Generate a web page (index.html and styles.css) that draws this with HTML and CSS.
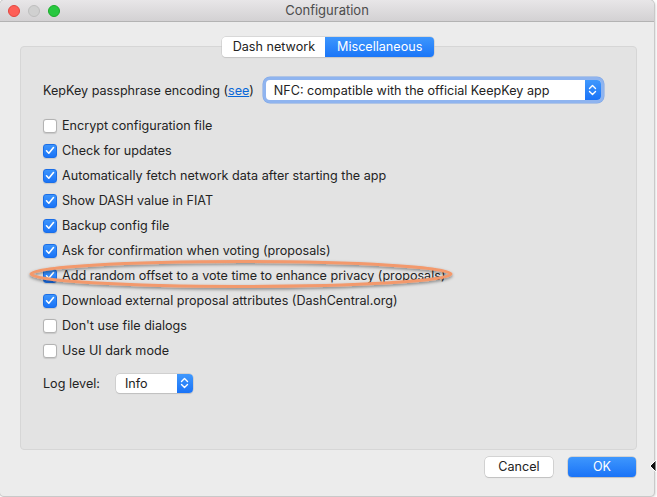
FILE: index.html
```html
<!DOCTYPE html>
<html>
<head>
<meta charset="utf-8">
<link rel="stylesheet" href="styles.css">
</head>
<body>
<div class="window">
  <div class="titlebar">
    <div class="lights">
      <span class="light red"></span>
      <span class="light gray"></span>
      <span class="light green"></span>
    </div>
    <div class="title">Configuration</div>
  </div>
  <div class="content">
    <div class="tabs">
      <div class="tab">Dash network</div>
      <div class="tab active">Miscellaneous</div>
    </div>
    <div class="panel">
      <div class="enc-row">
        <span class="label">KepKey passphrase encoding (<a class="link">see</a>)</span>
        <div class="select big focus">
          <span class="select-text">NFC: compatible with the official KeepKey app</span>
          <span class="stepper"><svg width="9" height="12" viewBox="0 0 9 12"><path d="M1.5 4.5 L4.5 1.5 L7.5 4.5 M1.5 7.5 L4.5 10.5 L7.5 7.5" fill="none" stroke="#fff" stroke-width="1.4" stroke-linecap="round" stroke-linejoin="round"/></svg></span>
        </div>
      </div>
      <div class="checks">
        <div class="check"><span class="box"></span>Encrypt configuration file</div>
        <div class="check"><span class="box on"><svg width="10" height="9" viewBox="0 0 10 9"><path d="M1.5 4.8 L3.8 7.2 L8.5 1.5" fill="none" stroke="#fff" stroke-width="1.6" stroke-linecap="round" stroke-linejoin="round"/></svg></span>Check for updates</div>
        <div class="check"><span class="box on"><svg width="10" height="9" viewBox="0 0 10 9"><path d="M1.5 4.8 L3.8 7.2 L8.5 1.5" fill="none" stroke="#fff" stroke-width="1.6" stroke-linecap="round" stroke-linejoin="round"/></svg></span>Automatically fetch network data after starting the app</div>
        <div class="check"><span class="box on"><svg width="10" height="9" viewBox="0 0 10 9"><path d="M1.5 4.8 L3.8 7.2 L8.5 1.5" fill="none" stroke="#fff" stroke-width="1.6" stroke-linecap="round" stroke-linejoin="round"/></svg></span>Show DASH value in FIAT</div>
        <div class="check"><span class="box on"><svg width="10" height="9" viewBox="0 0 10 9"><path d="M1.5 4.8 L3.8 7.2 L8.5 1.5" fill="none" stroke="#fff" stroke-width="1.6" stroke-linecap="round" stroke-linejoin="round"/></svg></span>Backup config file</div>
        <div class="check"><span class="box on"><svg width="10" height="9" viewBox="0 0 10 9"><path d="M1.5 4.8 L3.8 7.2 L8.5 1.5" fill="none" stroke="#fff" stroke-width="1.6" stroke-linecap="round" stroke-linejoin="round"/></svg></span>Ask for confirmation when voting (proposals)</div>
        <div class="check"><span class="box on"><svg width="10" height="9" viewBox="0 0 10 9"><path d="M1.5 4.8 L3.8 7.2 L8.5 1.5" fill="none" stroke="#fff" stroke-width="1.6" stroke-linecap="round" stroke-linejoin="round"/></svg></span>Add random offset to a vote time to enhance privacy (proposals)</div>
        <div class="check"><span class="box on"><svg width="10" height="9" viewBox="0 0 10 9"><path d="M1.5 4.8 L3.8 7.2 L8.5 1.5" fill="none" stroke="#fff" stroke-width="1.6" stroke-linecap="round" stroke-linejoin="round"/></svg></span>Download external proposal attributes (DashCentral.org)</div>
        <div class="check"><span class="box"></span>Don't use file dialogs</div>
        <div class="check"><span class="box"></span>Use UI dark mode</div>
      </div>
      <div class="log-row">
        <span class="label">Log level:</span>
        <div class="select small">
          <span class="select-text">Info</span>
          <span class="stepper"><svg width="9" height="12" viewBox="0 0 9 12"><path d="M1.5 4.5 L4.5 1.5 L7.5 4.5 M1.5 7.5 L4.5 10.5 L7.5 7.5" fill="none" stroke="#fff" stroke-width="1.4" stroke-linecap="round" stroke-linejoin="round"/></svg></span>
        </div>
      </div>
    </div>
    <div class="buttons">
      <div class="btn">Cancel</div>
      <div class="btn primary">OK</div>
    </div>
  </div>
</div>
<svg class="annotation" width="657" height="497" viewBox="0 0 657 497">
  <defs>
    <filter id="sh" x="-10%" y="-50%" width="120%" height="200%">
      <feDropShadow dx="0" dy="1.5" stdDeviation="1.5" flood-color="#000" flood-opacity="0.45"/>
    </filter>
  </defs>
  <ellipse cx="241" cy="274" rx="210" ry="12.5" fill="none" stroke="#f3996c" stroke-width="3" filter="url(#sh)"/>
</svg>
<svg class="cursor" width="8" height="14" viewBox="0 0 8 14"><path d="M7 1 L1 7 L7 13 Z" fill="#111" stroke="#fff" stroke-width="1"/></svg>
</body>
</html>
```
FILE: styles.css
```css
html, body {
  margin: 0;
  padding: 0;
  background: #ffffff;
  width: 657px;
  height: 497px;
  overflow: hidden;
  font-family: Inter, "Liberation Sans", Arial, sans-serif;
  font-size: 12.6px;
  color: #232323;
}
.window {
  width: 654px;
  height: 496px;
  background: #ececec;
  border-radius: 5px 5px 4px 4px;
  box-shadow: 0 0 0 1px #c9c9c9, 1px 1px 3px rgba(0,0,0,0.25);
  overflow: hidden;
  display: flex;
  flex-direction: column;
}
.titlebar {
  height: 21px;
  flex: none;
  background: linear-gradient(#e8e6e8, #d3d1d3);
  border-bottom: 1px solid #b3b3b3;
  display: flex;
  align-items: center;
  position: relative;
}
.lights {
  display: flex;
  gap: 8px;
  padding-left: 8px;
}
.light {
  width: 12px;
  height: 12px;
  border-radius: 50%;
  box-sizing: border-box;
}
.light.red { background: #fe5f57; border: 0.5px solid #e2463f; }
.light.gray { background: #d0d0d0; border: 0.5px solid #bdbdbd; }
.light.green { background: #28c840; border: 0.5px solid #1aab29; }
.title {
  position: absolute;
  left: 0;
  right: 0;
  text-align: center;
  color: #4c4c4c;
  font-size: 13px;
  line-height: 21px;
}
.content {
  flex: 1;
  display: flex;
  flex-direction: column;
  padding: 15px 17px 0 20px;
}
.tabs {
  display: flex;
  align-self: center;
  margin-left: -1px;
  margin-bottom: -11px;
  position: relative;
  z-index: 1;
  height: 20px;
  border-radius: 4px;
  box-shadow: 0 0 0 0.5px #c4c4c4, 0 1px 1px rgba(0,0,0,0.12);
  overflow: hidden;
}
.tab {
  background: #fff;
  line-height: 20px;
  padding: 0 10px 0 11px;
  color: #222;
}
.tab.active {
  background: linear-gradient(#3d96fd, #1b76f8);
  color: #fff;
  padding: 0 12px 0 12px;
}
.panel {
  box-sizing: border-box;
  height: 404px;
  background: #e3e3e3;
  border: 1px solid #d6d6d6;
  border-radius: 4px;
  padding: 30px 0 0 22px;
  display: flex;
  flex-direction: column;
}
.enc-row {
  display: flex;
  align-items: center;
  height: 26px;
}
.label { white-space: nowrap; }
.link {
  color: #0a68d8;
  text-decoration: underline;
}
.select {
  position: relative;
  background: #fff;
  border-radius: 4px;
  box-shadow: 0 0 0 0.5px #bdbdbd, 0 1px 1px rgba(0,0,0,0.15);
  display: flex;
  align-items: center;
}
.select.big {
  width: 335px;
  height: 20px;
  margin-left: 12px;
}
.select.focus {
  box-shadow: 0 0 0 3px #8fb4ef, 0 0 0 3.5px #7ea6e6;
}
.select.small {
  width: 77px;
  height: 19px;
  margin-left: 16px;
}
.select-text {
  flex: 1;
  padding-left: 8px;
  white-space: nowrap;
}
.select.small .select-text { padding-left: 9px; }
.stepper {
  width: 16px;
  align-self: stretch;
  background: linear-gradient(#3f98fd, #1a73f7);
  border-radius: 0 4px 4px 0;
  display: flex;
  align-items: center;
  justify-content: center;
}
.checks {
  margin-top: 10px;
  display: flex;
  flex-direction: column;
}
.check {
  height: 25px;
  display: flex;
  align-items: center;
  gap: 5px;
  white-space: nowrap;
}
.box {
  width: 14px;
  height: 14px;
  box-sizing: border-box;
  border-radius: 3px;
  background: #fff;
  border: 0.5px solid #b3b3b3;
  box-shadow: 0 0.5px 1px rgba(0,0,0,0.12);
  display: flex;
  align-items: center;
  justify-content: center;
  flex: none;
}
.box.on {
  background: linear-gradient(#3d95fc, #1b74f7);
  border: 0.5px solid #1a6ee8;
}
.log-row {
  margin-top: 10px;
  display: flex;
  align-items: center;
  height: 20px;
}
.buttons {
  display: flex;
  justify-content: flex-end;
  gap: 15px;
  margin-top: 7px;
  padding-right: 1px;
}
.btn {
  width: 68px;
  height: 20px;
  line-height: 20px;
  text-align: center;
  background: #fff;
  border-radius: 4px;
  box-shadow: 0 0 0 0.5px #b9b9b9, 0 1px 1px rgba(0,0,0,0.15);
  color: #222;
}
.btn.primary {
  background: linear-gradient(#3e97fd, #1a73f7);
  color: #fff;
}
.annotation {
  position: absolute;
  left: 0;
  top: 0;
  pointer-events: none;
}
.cursor {
  position: absolute;
  left: 649px;
  top: 459px;
}
```
